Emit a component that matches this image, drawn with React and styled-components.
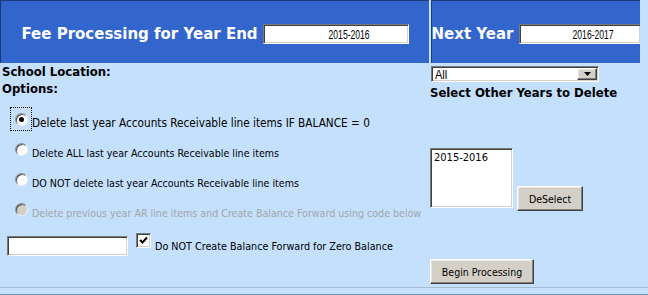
import React from "react";
import styled, { createGlobalStyle } from "styled-components";

const Global = createGlobalStyle`
  html, body { margin: 0; padding: 0; background: #C4E0FC; }
  body { width: 648px; height: 295px; overflow: hidden; }
  * { box-sizing: border-box; }
`;

const Page = styled.div`
  width: 648px;
  height: 295px;
  background: #C4E0FC;
  display: flex;
  flex-direction: column;
  font-family: "DejaVu Sans Condensed", "DejaVu Sans", sans-serif;
  color: #000;
`;

const Header = styled.div`
  display: grid;
  grid-template-columns: 429px 209px;
  column-gap: 2px;
  height: 63px;
`;

const HeadCell = styled.div`
  background: #3366CC;
  border-top: 1px solid #1D3A78;
  border-left: 1px solid #1D3A78;
  display: flex;
  align-items: center;
  justify-content: center;
  gap: 5px;
  padding-top: 4px;
  overflow: hidden;
`;

const HeadTitle = styled.span`
  color: #fff;
  font: bold 15px "DejaVu Sans", sans-serif;
  white-space: nowrap;
`;

const sunken = `
  border-style: solid;
  border-width: 1px;
  border-color: #7A7A7A #FFFFFF #FFFFFF #7A7A7A;
  box-shadow: inset 1px 1px 0 #404040, inset -1px -1px 0 #D4D0C8;
`;

const raised = `
  border-style: solid;
  border-width: 1px;
  border-color: #FFFFFF #404040 #404040 #FFFFFF;
  box-shadow: inset -1px -1px 0 #808080, inset 1px 1px 0 #E8E6E0;
`;

const NarrowText = styled.span`
  display: inline-block;
  font: 13px "Liberation Sans", Arial, sans-serif;
  transform: scaleX(${(p) => p.$sx || 0.66});
  transform-origin: ${(p) => p.$origin || "center"};
  white-space: nowrap;
`;

const YearBox = styled.div`
  ${sunken}
  background: #fff;
  width: ${(p) => p.$w}px;
  height: 20px;
  flex: none;
  display: flex;
  align-items: center;
  justify-content: center;
  padding-left: 28px;
`;

const Body = styled.div`
  display: grid;
  grid-template-columns: 430px 1fr;
  height: 224px;
`;

const Column = styled.div`
  display: flex;
  flex-direction: column;
  align-items: flex-start;
`;

const Label = styled.div`
  font-weight: bold;
  font-size: 13px;
  line-height: 17px;
  padding-left: ${(p) => p.$pl || 0}px;
  white-space: nowrap;
`;

const RadioList = styled.div`
  margin-top: 7px;
  display: flex;
  flex-direction: column;
`;

const RadioRow = styled.div`
  height: 30px;
  display: flex;
  align-items: center;
  padding-left: 10px;
  font-size: ${(p) => (p.$big ? 11.7 : 10.6)}px;
  color: ${(p) => (p.$disabled ? "#A2A6AB" : "#000")};
  white-space: nowrap;
`;

const FocusBox = styled.div`
  width: 22px;
  height: 24px;
  border: 1px dotted ${(p) => (p.$focus ? "#000" : "transparent")};
  display: flex;
  align-items: center;
  justify-content: center;
  flex: none;
`;

const RadioCircle = styled.span`
  width: 13px;
  height: 13px;
  border-radius: 50%;
  background: ${(p) => (p.$disabled ? "#D4D0C8" : "#fff")};
  border: 1px solid;
  border-color: #8E8E8E #F0F0F0 #F0F0F0 #8E8E8E;
  box-shadow: inset 1px 1px 0 #505050;
  display: flex;
  align-items: center;
  justify-content: center;
  margin-left: 1px;
`;

const Dot = styled.span`
  width: 5px;
  height: 5px;
  border-radius: 50%;
  background: #000;
`;

const RadioText = styled.span`
  margin-top: 7px;
`;

const BottomRow = styled.div`
  margin-top: 12px;
  padding-left: 7px;
  display: flex;
  align-items: flex-start;
`;

const TextBox = styled.div`
  ${sunken}
  background: #fff;
  width: 121px;
  height: 20px;
`;

const CheckBox = styled.span`
  ${sunken}
  background: #fff;
  width: 15px;
  height: 15px;
  margin-left: 8px;
  margin-top: -3px;
  display: flex;
  align-items: center;
  justify-content: center;
  flex: none;
`;

const CheckLabel = styled.span`
  font-size: 10.7px;
  margin-left: 4px;
  margin-top: 4px;
  white-space: nowrap;
`;

const SelectBox = styled.div`
  ${sunken}
  background: #fff;
  width: 168px;
  height: 16px;
  margin-top: 3px;
  margin-left: 1px;
  margin-bottom: 2px;
  display: flex;
  align-items: center;
  justify-content: space-between;
  padding: 0 1px 0 3px;
`;

const DropBtn = styled.span`
  ${raised}
  background: #D4D0C8;
  width: 20px;
  height: 12px;
  display: flex;
  align-items: center;
  justify-content: center;
`;

const ListRow = styled.div`
  margin-top: 47px;
  display: flex;
  align-items: flex-end;
  gap: 4px;
`;

const ListBox = styled.div`
  ${sunken}
  background: #fff;
  width: 83px;
  height: 60px;
  padding: 2px 3px;
  font-size: 11px;
`;

const Button = styled.button`
  ${raised}
  background: #D4D0C8;
  width: ${(p) => p.$w}px;
  height: 25px;
  padding: 0;
  font: 10.5px "DejaVu Sans Condensed", "DejaVu Sans", sans-serif;
  color: #000;
  margin-bottom: ${(p) => p.$mb || 0}px;
  margin-top: ${(p) => p.$mt || 0}px;
`;

const Footer = styled.div`
  height: 8px;
  border-top: 1px solid #A6BCD3;
  border-bottom: 1px solid #6F8FB3;
`;

const options = [
  { text: "Delete last year Accounts Receivable line items IF BALANCE = 0", checked: true, focus: true, big: true },
  { text: "Delete ALL last year Accounts Receivable line items" },
  { text: "DO NOT delete last year Accounts Receivable line items" },
  { text: "Delete previous year AR line items and Create Balance Forward using code below", disabled: true },
];

export default function App() {
  return (
    <Page>
      <Global />
      <Header>
        <HeadCell>
          <HeadTitle>Fee Processing for Year End</HeadTitle>
          <YearBox $w={146}>
            <NarrowText>2015-2016</NarrowText>
          </YearBox>
        </HeadCell>
        <HeadCell>
          <HeadTitle>Next Year</HeadTitle>
          <YearBox $w={122}>
            <NarrowText>2016-2017</NarrowText>
          </YearBox>
        </HeadCell>
      </Header>
      <Body>
        <Column>
          <Label $pl={2}>School Location:</Label>
          <Label $pl={2}>Options:</Label>
          <RadioList>
            {options.map((o) => (
              <RadioRow key={o.text} $disabled={o.disabled} $big={o.big}>
                <FocusBox $focus={o.focus}>
                  <RadioCircle $disabled={o.disabled}>{o.checked && <Dot />}</RadioCircle>
                </FocusBox>
                <RadioText>{o.text}</RadioText>
              </RadioRow>
            ))}
          </RadioList>
          <BottomRow>
            <TextBox />
            <CheckBox>
              <svg width="9" height="9" viewBox="0 0 9 9">
                <path d="M1 4 L3.5 6.5 L8 1.5" fill="none" stroke="#000" strokeWidth="2" />
              </svg>
            </CheckBox>
            <CheckLabel>Do NOT Create Balance Forward for Zero Balance</CheckLabel>
          </BottomRow>
        </Column>
        <Column>
          <SelectBox>
            <NarrowText $sx={0.85} $origin="left">All</NarrowText>
            <DropBtn>
              <svg width="7" height="4" viewBox="0 0 7 4">
                <path d="M0 0 L7 0 L3.5 4 Z" fill="#000" />
              </svg>
            </DropBtn>
          </SelectBox>
          <Label>Select Other Years to Delete</Label>
          <ListRow>
            <ListBox>2015-2016</ListBox>
            <Button $w={66} $mb={-3}>DeSelect</Button>
          </ListRow>
          <Button $w={104} $mt={51}>Begin Processing</Button>
        </Column>
      </Body>
      <Footer />
    </Page>
  );
}
